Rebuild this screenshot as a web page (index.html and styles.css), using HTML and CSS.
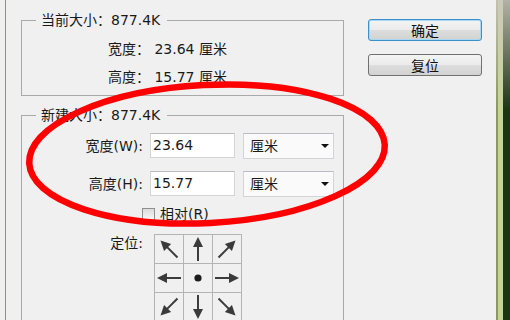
FILE: index.html
```html
<!DOCTYPE html>
<html lang="zh-CN">
<head>
    <meta charset="UTF-8">
    <title>图像大小</title>
    <link rel="stylesheet" href="styles.css">
</head>
<body>

<div class="screen">
    <div class="dialog">
        <div class="groups">
            <fieldset class="group current">
                <legend>当前大小：877.4K</legend>
                <div class="info">
                    <span>宽度： 23.64 厘米</span>
                    <span>高度： 15.77 厘米</span>
                </div>
            </fieldset>

            <fieldset class="group new">
                <legend>新建大小：877.4K</legend>
                <div class="row">
                    <span class="field-label">宽度(W):</span>
                    <div class="input">23.64</div>
                    <div class="select">厘米<span class="caret"></span></div>
                </div>
                <div class="row second">
                    <span class="field-label">高度(H):</span>
                    <div class="input">15.77</div>
                    <div class="select">厘米<span class="caret"></span></div>
                </div>
                <div class="check-row">
                    <span class="checkbox"></span>相对(R)
                </div>
                <div class="anchor-row">
                    <span class="field-label">定位:</span>
                    <div class="anchor">
                        <div class="cell"><svg class="arrow nw" viewBox="0 0 28 28"><path d="M14 26V11" /><polygon points="14,2 9,12 19,12" /></svg></div>
                        <div class="cell"><svg class="arrow" viewBox="0 0 28 28"><path d="M14 26V11" /><polygon points="14,2 9,12 19,12" /></svg></div>
                        <div class="cell"><svg class="arrow ne" viewBox="0 0 28 28"><path d="M14 26V11" /><polygon points="14,2 9,12 19,12" /></svg></div>
                        <div class="cell"><svg class="arrow w" viewBox="0 0 28 28"><path d="M14 26V11" /><polygon points="14,2 9,12 19,12" /></svg></div>
                        <div class="cell"><svg viewBox="0 0 28 28"><circle cx="14" cy="14" r="3.6" /></svg></div>
                        <div class="cell"><svg class="arrow e" viewBox="0 0 28 28"><path d="M14 26V11" /><polygon points="14,2 9,12 19,12" /></svg></div>
                        <div class="cell"><svg class="arrow sw" viewBox="0 0 28 28"><path d="M14 26V11" /><polygon points="14,2 9,12 19,12" /></svg></div>
                        <div class="cell"><svg class="arrow s" viewBox="0 0 28 28"><path d="M14 26V11" /><polygon points="14,2 9,12 19,12" /></svg></div>
                        <div class="cell"><svg class="arrow se" viewBox="0 0 28 28"><path d="M14 26V11" /><polygon points="14,2 9,12 19,12" /></svg></div>
                    </div>
                </div>
            </fieldset>
        </div>

        <div class="buttons">
            <button class="btn default">确定</button>
            <button class="btn">复位</button>
        </div>
    </div>

    <div class="desktop"></div>

    <!-- red marker drawn over the dialog -->
    <svg class="mark" viewBox="0 0 510 320">
        <ellipse cx="207" cy="154" rx="178" ry="69" transform="rotate(-3 207 154)" />
    </svg>
</div>

</body>
</html>
```

FILE: styles.css
```css
body {
    margin: 0;
    background: #f0f0f0;
    color: #1a1a1a;
    font-family: "DejaVu Sans", "Noto Sans CJK SC", sans-serif;
    font-size: 14px;
    line-height: 18px;
    overflow: hidden;
}
.screen {
    position: relative;
    display: flex;
    width: 510px;
    height: 320px;
    overflow: hidden;
}
.dialog {
    flex: 1;
    display: flex;
    margin-left: 5px;
    padding-left: 15px;
    border-left: 1px solid #8f9288;
}
.groups {
    width: 323px;
}
.group {
    margin: 0;
    padding: 0;
    border: 1px solid #a9a9a9;
    min-width: 0;
}
.group legend {
    margin-left: 14px;
    padding: 0 7px 0 5px;
    line-height: 18px;
}
.current {
    margin-top: 11px;
}
.info {
    display: flex;
    flex-direction: column;
    padding: 6px 0 4px 86px;
    line-height: 28px;
}
.new {
    margin-top: 10px;
    padding-top: 9px;
    padding-bottom: 20px;
}
.row {
    display: flex;
    align-items: center;
    height: 25px;
}
.row.second {
    margin-top: 13px;
}
.field-label {
    width: 121px;
    margin-right: 7px;
    text-align: right;
}
.input {
    box-sizing: border-box;
    width: 85px;
    height: 25px;
    padding-left: 2px;
    line-height: 23px;
    background: #fff;
    border: 1px solid #d2d4d8;
    border-top-color: #b8bcc2;
}
.select {
    box-sizing: border-box;
    display: flex;
    align-items: center;
    justify-content: space-between;
    width: 91px;
    height: 26px;
    margin-left: 8px;
    padding: 0 4px 0 6px;
    background: #fafafa;
    border: 1px solid #d2d4d8;
    border-top-color: #b8bcc2;
}
.caret {
    width: 0;
    height: 0;
    border-left: 4px solid transparent;
    border-right: 4px solid transparent;
    border-top: 4px solid #111;
}
.check-row {
    display: flex;
    align-items: center;
    margin-top: 9px;
    padding-left: 120px;
}
.checkbox {
    box-sizing: border-box;
    width: 13px;
    height: 13px;
    margin-right: 5px;
    border: 1px solid #8e8f8f;
    background: linear-gradient(#dcdcdc, #f8f8f8);
}
.anchor-row {
    display: flex;
    align-items: flex-start;
    margin-top: 11px;
}
.anchor {
    display: grid;
    grid-template-columns: repeat(3, 28px);
    grid-auto-rows: 28px;
    gap: 1px;
    padding: 1px;
    margin-left: 4px;
    background: #b4b4b4;
}
.cell {
    background: #f0f0f0;
}
.cell svg {
    display: block;
    width: 28px;
    height: 28px;
    fill: #1c1c1c;
}
.arrow path {
    stroke: #3c3c3c;
    stroke-width: 2;
}
.arrow polygon {
    fill: #3a3a3a;
}
.arrow.ne { transform: rotate(45deg); }
.arrow.e { transform: rotate(90deg); }
.arrow.se { transform: rotate(135deg); }
.arrow.s { transform: rotate(180deg); }
.arrow.sw { transform: rotate(225deg); }
.arrow.w { transform: rotate(270deg); }
.arrow.nw { transform: rotate(315deg); }
.buttons {
    display: flex;
    flex-direction: column;
    gap: 13px;
    width: 114px;
    margin-left: 24px;
    padding-top: 19px;
}
.btn {
    height: 22px;
    padding: 0;
    font-family: inherit;
    font-size: 14px;
    color: #111;
    border: 1px solid #707070;
    border-radius: 3px;
    background: linear-gradient(#f4f4f4 0%, #ebebeb 50%, #dddddd 51%, #d2d2d2 100%);
}
.btn.default {
    border-color: #3c8fc8;
    box-shadow: inset 0 0 0 1px #a6d8f4;
}
.desktop {
    width: 14px;
    background:
        linear-gradient(rgba(205, 200, 190, 0.85), rgba(205, 200, 190, 0) 110px),
        linear-gradient(to right, #8a9a5e 0 2px, #c6d496 2px 7px, #1d3415 7px);
}
.mark {
    position: absolute;
    left: 0;
    top: 0;
    width: 510px;
    height: 320px;
    pointer-events: none;
}
.mark ellipse {
    fill: none;
    stroke: #ff0000;
    stroke-width: 6.5;
}
```
